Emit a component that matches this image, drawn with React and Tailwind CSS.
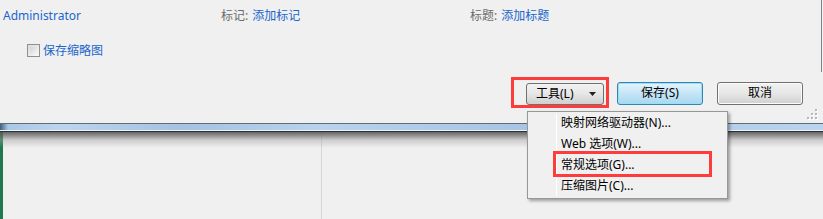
import React from 'react';

const font = { fontFamily: '"Noto Sans", "Noto Sans CJK SC", sans-serif' };

function Grip() {
    const dots = [[8, 0], [4, 4], [8, 4], [0, 8], [4, 8], [8, 8]];
    return (
        <svg width="11" height="11" className="absolute right-[5px] bottom-[3px]">
            {dots.map(([x, y], i) => (
                <g key={i}>
                    <rect x={x + 1} y={y + 1} width="2" height="2" fill="#ffffff" />
                    <rect x={x} y={y} width="2" height="2" fill="#b8b8b8" />
                </g>
            ))}
        </svg>
    );
}

export default function App() {
    const menu = ['映射网络驱动器(N)...', 'Web 选项(W)...', '常规选项(G)...', '压缩图片(C)...'];

    return (
        <div className="relative w-[823px] h-[219px] overflow-hidden bg-[#f0f0f0] text-[12px] leading-none" style={font}>
            {/* dialog */}
            <div className="relative h-[123px] flex flex-col">
                <div className="absolute right-[1px] top-0 h-[72px] w-px bg-[#7a8594]"></div>

                <div className="flex items-center h-[30px] pt-px">
                    <div className="w-[220px] pl-[3px] text-[#1a66cc]">Administrator</div>
                    <div className="w-[250px] flex gap-1 pl-px">
                        <span className="text-[#6b6b6b]">标记:</span>
                        <span className="text-[#1a66cc]">添加标记</span>
                    </div>
                    <div className="flex gap-1">
                        <span className="text-[#6b6b6b]">标题:</span>
                        <span className="text-[#1a66cc]">添加标题</span>
                    </div>
                </div>

                <div className="flex items-center gap-[3px] pl-[27px] mt-[14px]">
                    <div className="w-[13px] h-[13px] border border-[#8e8f8f] bg-gradient-to-br from-[#dcdcdc] to-[#f8f8f8] p-[2px]">
                        <div className="w-full h-full bg-gradient-to-br from-[#d4d4d4] to-[#f4f4f4]"></div>
                    </div>
                    <span className="text-[#1a66cc]">保存缩略图</span>
                </div>

                <div className="flex justify-end items-center gap-[14px] pr-[20px] mt-[24px]">
                    <button className="w-[78px] h-[22px] mt-[2px] mr-[-1px] flex items-center justify-between pl-[9px] pr-[7px] rounded-[3px] border border-[#707070] bg-gradient-to-b from-[#f2f2f2] via-[#e6e6e6] to-[#cfcfcf] text-black">
                        <span>工具(L)</span>
                        <svg width="7" height="4"><path d="M0 0H7L3.5 4Z" fill="#222" /></svg>
                    </button>
                    <button className="w-[86px] h-[23px] rounded-[3px] border border-[#3c7fb1] bg-gradient-to-b from-[#e5f4fc] via-[#c4e5f6] to-[#a9d7f0] shadow-[inset_0_0_0_1px_#8fe4f8] text-black">
                        保存(S)
                    </button>
                    <button className="w-[86px] h-[23px] rounded-[3px] border border-[#707070] bg-gradient-to-b from-[#f2f2f2] via-[#e6e6e6] to-[#d0d0d0] shadow-[inset_0_0_0_1px_#fcfcfc] text-black">
                        取消
                    </button>
                </div>

                <Grip />
            </div>

            {/* window frame edge */}
            <div className="h-px bg-[#5f6b78]"></div>
            <div className="h-[6px]" style={{ backgroundImage: 'linear-gradient(to right, #3f6075 0px, #a9c7e7 8px, #bcd5ef 60px, #a5c2e2 180px, #b9d3ee 320px, #a8c5e5 520px, #bad4ef 823px)' }}></div>
            <div className="h-px bg-[#eef3f8]"></div>
            <div className="h-px bg-[#2c3238]"></div>

            {/* area below */}
            <div className="relative flex h-[88px]">
                <div className="w-[3px] bg-[#1f7a4b]"></div>
                <div className="w-[319px] border-r border-[#d6d6d6]"></div>
                <div className="absolute inset-x-0 top-0 h-[16px] bg-gradient-to-b from-[#555555]/90 via-[#a0a0a0]/45 to-transparent"></div>
            </div>

            {/* annotation around tools button */}
            <div className="absolute left-[511px] top-[77px] w-[98px] h-[31px] border-[3px] border-[#ff3c3c]"></div>

            {/* tools dropdown menu */}
            <div className="absolute left-[527px] top-[111px] w-[201px] h-[88px] bg-[#f0f0f0] border border-[#979797] shadow-[2px_2px_3px_rgba(0,0,0,0.35)]">
                <div className="absolute left-[28px] top-[2px] bottom-[2px] w-px bg-[#e2e3e3] border-r border-white"></div>
                {menu.map((m) => (
                    <div key={m} className="h-[21px] flex items-center pl-[33px] text-black">{m}</div>
                ))}
            </div>

            {/* annotation around general options */}
            <div className="absolute left-[553px] top-[151px] w-[159px] h-[26px] border-[3px] border-[#ff3c3c]"></div>
        </div>
    );
}
